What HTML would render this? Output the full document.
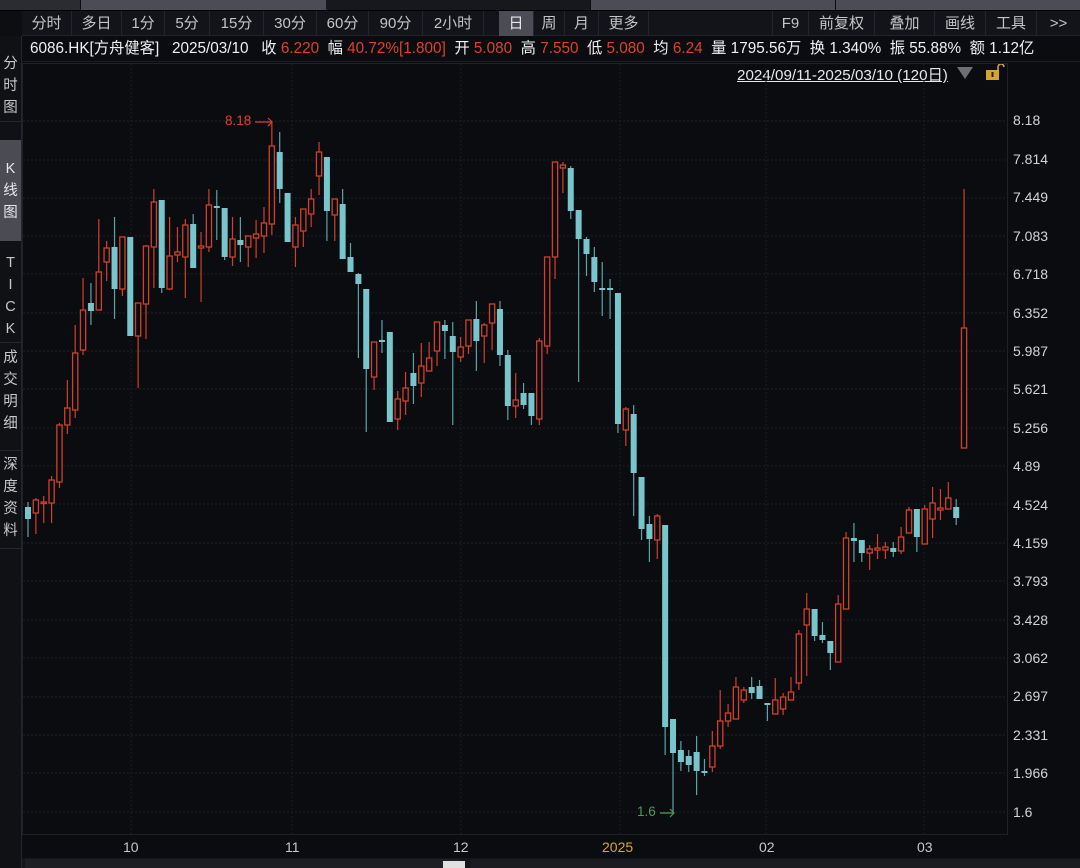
<!DOCTYPE html>
<html><head><meta charset="utf-8"><style>
*{margin:0;padding:0;box-sizing:border-box}
body{width:1080px;height:868px;background:#0b0c10;overflow:hidden;font-family:"Liberation Sans","Noto Sans CJK SC",sans-serif;position:relative;color:#d0d0d0}
.abs{position:absolute}
.tabs{top:11px;left:22px;height:25px;width:1058px;background:#131419;border-bottom:1px solid #22232a}
.tab{position:absolute;top:0;height:25px;line-height:25px;font-size:15px;color:#c4c4c8;text-align:center;border-right:1px solid #25262d}
.info{top:37px;left:22px;width:1058px;height:25px;border-bottom:1px solid #1c1d22;font-size:15.3px;color:#f0f0f0;line-height:24px;white-space:nowrap;padding-left:8px}
.r{color:#e0402c}
.side{left:0;top:36px;width:22px;height:832px;background:#101115;border-right:1px solid #25262d}
.si{position:absolute;left:0;width:21px;font-size:14.5px;color:#c8c8cc;text-align:center;line-height:22px}
.pl{position:absolute;left:1013px;font-size:14px;color:#d4d4d8}
.xl{position:absolute;top:839px;font-size:14px;color:#c8c8cc}
</style></head><body>
<div class="abs" style="top:0;left:0;width:80px;height:10px;background:#2b2c31"></div>
<div class="abs" style="top:0;left:81px;width:245px;height:10px;background:#4b4c55"></div>
<div class="abs" style="top:0;left:326px;width:264px;height:10px;background:#17181c"></div>
<div class="abs" style="top:0;left:591px;width:244px;height:10px;background:#4b4c55"></div>
<div class="abs" style="top:0;left:836px;width:244px;height:10px;background:#4b4c55"></div>
<div class="abs" style="top:10px;left:0;width:1080px;height:1px;background:#000"></div>
<div class="abs" style="top:11px;left:0;width:22px;height:25px;background:#0d0e12"></div>
<div class="abs tabs">
<div class="tab" style="left:0;width:50px">分时</div>
<div class="tab" style="left:50px;width:50px">多日</div>
<div class="tab" style="left:100px;width:43px">1分</div>
<div class="tab" style="left:143px;width:45px">5分</div>
<div class="tab" style="left:188px;width:54px">15分</div>
<div class="tab" style="left:242px;width:53px">30分</div>
<div class="tab" style="left:295px;width:52px">60分</div>
<div class="tab" style="left:347px;width:54px">90分</div>
<div class="tab" style="left:401px;width:61px">2小时</div>
<div class="tab" style="left:477px;width:35px;background:#4b4c56;color:#e8e8ec">日</div>
<div class="tab" style="left:512px;width:31px">周</div>
<div class="tab" style="left:543px;width:34px">月</div>
<div class="tab" style="left:577px;width:50px">更多</div>
<div class="tab" style="left:750px;width:37px;border-left:1px solid #25262d">F9</div>
<div class="tab" style="left:787px;width:66px">前复权</div>
<div class="tab" style="left:853px;width:60px">叠加</div>
<div class="tab" style="left:913px;width:51px">画线</div>
<div class="tab" style="left:964px;width:51px">工具</div>
<div class="tab" style="left:1015px;width:43px;border:none">&gt;&gt;</div>
</div>
<div class="abs info">6086.HK[方舟健客]&nbsp;&nbsp; 2025/03/10 &nbsp; 收 <span class="r">6.220</span> &nbsp;幅 <span class="r">40.72%[1.800]</span> &nbsp;开 <span class="r">5.080</span> &nbsp;高 <span class="r">7.550</span> &nbsp;低 <span class="r">5.080</span> &nbsp;均 <span class="r">6.24</span> &nbsp;量 1795.56万 &nbsp;换 1.340% &nbsp;振 55.88% &nbsp;额 1.12亿</div>
<div class="abs side">
<div class="si" style="top:17px">分<br>时<br>图</div>
<div class="si" style="top:85px;height:20px;border-top:1px solid #25262d"></div>
<div class="si" style="top:104px;height:101px;background:#4a4b53;padding-top:18px;color:#e8e8ec">K<br>线<br>图</div>
<div class="si" style="top:216px">T<br>I<br>C<br>K</div>
<div class="si" style="top:306px;height:1px;background:#25262d"></div>
<div class="si" style="top:311px">成<br>交<br>明<br>细</div>
<div class="si" style="top:414px;height:1px;background:#25262d"></div>
<div class="si" style="top:418px">深<br>度<br>资<br>料</div>
<div class="si" style="top:512px;height:1px;background:#25262d"></div>
</div>
<div class="abs" style="top:63px;left:737px;font-size:15.2px;color:#e8e8ec;text-decoration:underline">2024/09/11-2025/03/10 (120日)</div>
<svg class="abs" style="top:66px;left:956px" width="20" height="14"><path d="M1 1H17L9 13Z" fill="#6e6e74"/></svg>
<svg class="abs" style="top:63px;left:984px" width="22" height="18"><path d="M14 7V4a3 3 0 0 1 6 0" stroke="#d4a42c" stroke-width="1.6" fill="none"/><rect x="2" y="7" width="13" height="10" fill="#d4a42c"/><rect x="7.5" y="9" width="2" height="5" fill="#2a2000"/></svg>
<svg id="ch" class="abs" style="top:0;left:0" width="1080" height="868"></svg>
<div class="pl" style="top:112px">8.18</div><div class="pl" style="top:151px">7.814</div><div class="pl" style="top:189px">7.449</div><div class="pl" style="top:228px">7.083</div><div class="pl" style="top:266px">6.718</div><div class="pl" style="top:305px">6.352</div><div class="pl" style="top:343px">5.987</div><div class="pl" style="top:381px">5.621</div><div class="pl" style="top:420px">5.256</div><div class="pl" style="top:458px">4.89</div><div class="pl" style="top:497px">4.524</div><div class="pl" style="top:535px">4.159</div><div class="pl" style="top:573px">3.793</div><div class="pl" style="top:612px">3.428</div><div class="pl" style="top:650px">3.062</div><div class="pl" style="top:688px">2.697</div><div class="pl" style="top:727px">2.331</div><div class="pl" style="top:765px">1.966</div><div class="pl" style="top:804px">1.6</div>
<div class="xl" style="left:123px">10</div><div class="xl" style="left:285px">11</div><div class="xl" style="left:453px">12</div><div class="xl" style="left:602px;color:#d9a53a">2025</div><div class="xl" style="left:759px">02</div><div class="xl" style="left:917px">03</div>
<div class="abs" style="top:858px;left:22px;width:1058px;height:10px;background:#15161a"></div>
<div class="abs" style="top:859px;left:25px;width:435px;height:9px;background:#1e1f24"></div>
<div class="abs" style="top:861px;left:443px;width:22px;height:7px;background:#e0e0e0"></div>
<div class="abs" style="top:859px;left:471px;width:609px;height:9px;background:#1b1c21"></div>
<div class="abs" style="top:113px;left:225px;font-size:13.5px;color:#e0402c">8.18</div>
<div class="abs" style="top:804px;left:637px;font-size:13.5px;color:#4f9a5a">1.6</div>
<script>
var D=[
[0,507,519,502,537],[1,500,513,498,534],[1,502,503,496,523],[1,480,503,476,523],[1,425,482,423,488],[1,408,425,380,434],[1,353,410,325,418],[1,310,350,278,355],[0,303,311,283,325],[1,272,310,219,310],
[1,248,262,241,281],[0,247,289,217,319],[1,237,289,237,296],[0,237,336,237,336],[1,303,336,303,388],[1,246,304,245,339],[1,202,247,189,288],[0,200,288,200,293],[1,256,289,217,290],[1,252,255,227,262],
[1,225,257,219,298],[0,224,268,214,268],[1,246,248,232,302],[1,205,247,189,252],[0,206,208,190,240],[0,208,257,208,260],[1,239,257,217,266],[0,240,245,217,262],[1,236,247,236,267],[1,234,238,220,258],
[1,223,236,207,253],[1,146,224,122,235],[0,152,189,132,203],[0,193,242,193,242],[1,225,247,217,267],[1,209,231,209,247],[1,199,214,189,227],[1,152,176,142,195],[0,157,211,157,241],[1,199,215,199,241],
[0,204,259,189,259],[0,257,272,243,272],[0,274,284,273,358],[0,289,369,289,432],[1,342,377,342,390],[0,340,342,320,353],[0,332,422,332,422],[1,399,419,391,430],[1,388,401,372,415],[0,373,386,353,404],
[1,366,383,343,397],[1,358,371,342,371],[1,322,351,322,366],[0,325,331,320,359],[0,336,352,322,425],[1,347,357,337,362],[1,320,346,320,354],[0,319,341,301,371],[1,325,336,323,363],[1,304,323,304,350],
[0,309,355,301,366],[0,355,406,350,420],[1,400,406,373,418],[0,393,405,383,409],[0,393,416,393,425],[1,341,419,338,425],[1,257,346,257,354],[1,162,257,162,279],[1,165,168,162,193],[0,168,211,166,219],
[0,210,239,210,382],[0,239,254,237,276],[0,257,282,247,292],[0,288,290,262,316],[0,288,290,279,319],[0,293,424,293,433],[1,409,430,407,446],[0,414,473,405,516],[0,477,529,477,540],[0,524,539,516,562],
[1,516,540,514,559],[0,525,727,525,755],[0,719,753,719,812],[0,750,762,741,771],[0,756,765,750,772],[0,752,771,736,795],[0,771,773,759,776],[1,746,767,731,772],[1,721,746,690,749],[1,713,721,704,727],
[1,687,719,677,719],[1,690,700,687,703],[0,687,693,677,699],[0,686,699,680,699],[0,703,705,703,721],[1,700,714,678,714],[1,697,709,693,715],[1,692,700,677,700],[1,634,683,630,690],[1,609,625,593,676],
[0,609,636,609,641],[0,635,640,622,643],[0,641,653,641,670],[1,604,662,595,662],[1,538,609,532,609],[0,538,541,523,562],[0,540,553,540,562],[1,549,553,545,570],[1,548,550,534,559],[1,547,550,542,559],
[0,548,552,542,557],[1,537,551,527,554],[1,510,533,507,533],[0,509,537,509,552],[1,509,544,505,544],[1,503,519,487,538],[1,508,510,489,520],[1,498,509,482,509],[0,507,518,499,525],[1,328,448,189,448]];
var s='';
s+='<rect x="22.5" y="63.5" width="985" height="771" fill="none" stroke="#202126"/>';
var ys=[121,160,198,236,274,313,351,389,428,466,504,543,581,620,658,697,735,773,812];
ys.forEach(function(y){s+='<line x1="23" x2="1007" y1="'+y+'" y2="'+y+'" stroke="#1f2025" stroke-dasharray="2 2"/>';});
[131,292,461,620,766,924].forEach(function(x){s+='<line y1="64" y2="834" x1="'+x+'" x2="'+x+'" stroke="#1a1b20" stroke-dasharray="2 2"/>';});
D.forEach(function(c,i){var x=28+7.866*i;var col=c[0]?'#d0402c':'#78c6cc';
s+='<line x1="'+x+'" x2="'+x+'" y1="'+c[3]+'" y2="'+c[4]+'" stroke="'+(c[0]?col:'#5aa4aa')+'" stroke-width="1.2"/>';
var h=Math.max(c[2]-c[1],1.5);
if(c[0])s+='<rect x="'+(x-2.6)+'" y="'+c[1]+'" width="5.2" height="'+h+'" fill="#0b0c10" stroke="'+col+'" stroke-width="1.3"/>';
else s+='<rect x="'+(x-3)+'" y="'+c[1]+'" width="6" height="'+h+'" fill="'+col+'"/>';});
s+='<path d="M255 122H272M268 118L272 122L268 126" stroke="#e0402c" fill="none" stroke-width="1.2"/>';
s+='<path d="M660 813H674M670 809L674 813L670 817" stroke="#4f9a5a" fill="none" stroke-width="1.2"/>';
document.getElementById('ch').innerHTML=s;
</script>
</body></html>
